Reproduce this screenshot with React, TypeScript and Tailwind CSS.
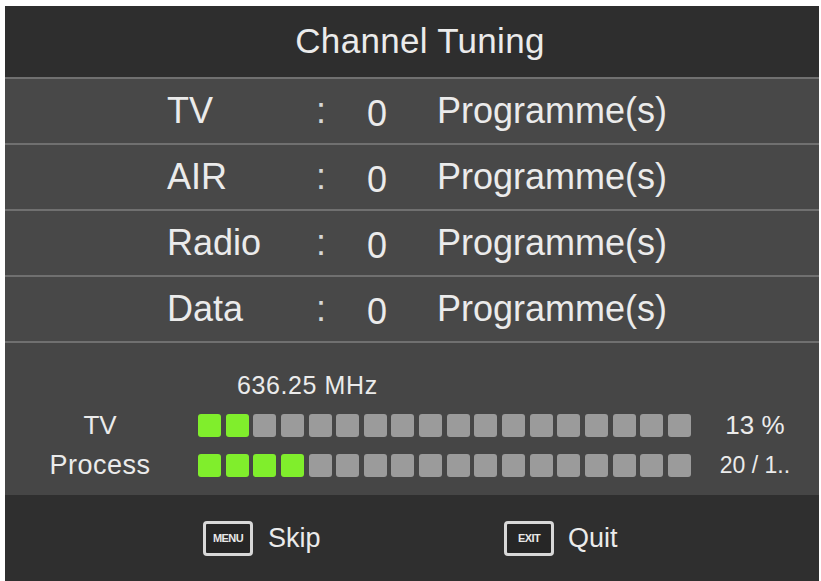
const rows = [
  { label: "TV", count: 0 },
  { label: "AIR", count: 0 },
  { label: "Radio", count: 0 },
  { label: "Data", count: 0 },
];

const font = { fontFamily: '"Liberation Sans", Arial, sans-serif' };

function Bar({ on }: { on: number }) {
  return (
    <div className="flex w-[493px] justify-between">
      {Array.from({ length: 18 }).map((_, i) => (
        <div
          key={i}
          className={
            i < on
              ? "h-[23px] w-[23px] rounded-[3px] bg-[#80ee2c]"
              : "h-[23px] w-[23px] rounded-[3px] bg-[#9b9b9b]"
          }
        />
      ))}
    </div>
  );
}

function KeyBox({ text }: { text: string }) {
  return (
    <div className="flex h-[35px] w-[50px] items-center justify-center rounded-[4px] border-[3px] border-[#d8d8d8] bg-[#262626]">
      <span className="text-[11px] font-bold tracking-tighter text-[#e8e8e8]">{text}</span>
    </div>
  );
}

export default function App() {
  return (
    <div className="h-[581px] w-[821px] bg-white pl-[5px] pr-[2px] pt-[6px]" style={font}>
      <div className="flex h-full flex-col text-[#ebebeb]">
        <div className="flex h-[71px] items-center justify-center bg-[#2e2e2e] pl-[16px] text-[35px] tracking-[0.3px]">
          Channel Tuning
        </div>

        {rows.map((r) => (
          <div
            key={r.label}
            className="flex h-[66px] items-center border-t-2 border-[#707070] bg-[#484848] pl-[162px] text-[36px]"
          >
            <span className="w-[149px]">{r.label}</span>
            <span className="w-[51px] text-[36px] text-[#d6d6d6]">:</span>
            <span className="mt-[6px] w-[70px]">{r.count}</span>
            <span>Programme(s)</span>
          </div>
        ))}

        <div className="flex h-[154px] flex-col border-t-2 border-[#707070] bg-[#464646] pt-[29px]">
          <div className="ml-[232px] h-[26px] text-[25px] leading-[26px] tracking-[0.6px]">636.25 MHz</div>
          <div className="mt-[7px] flex h-[40px] items-center pl-[35px]">
            <span className="w-[120px] text-center text-[26px]">TV</span>
            <div className="ml-[38px]">
              <Bar on={2} />
            </div>
            <span className="ml-[24px] w-[80px] text-center text-[26px]">13 %</span>
          </div>
          <div className="flex h-[40px] items-center pl-[35px]">
            <span className="w-[120px] text-center text-[27px] tracking-[0.5px]">Process</span>
            <div className="ml-[38px]">
              <Bar on={4} />
            </div>
            <span className="ml-[24px] w-[80px] text-center text-[23px]">20 / 1..</span>
          </div>
        </div>

        <div className="flex flex-1 items-center bg-[#2f2f2f] pl-[198px] text-[27px]">
          <KeyBox text="MENU" />
          <span className="ml-[15px] w-[236px]">Skip</span>
          <KeyBox text="EXIT" />
          <span className="ml-[14px]">Quit</span>
        </div>
      </div>
    </div>
  );
}
